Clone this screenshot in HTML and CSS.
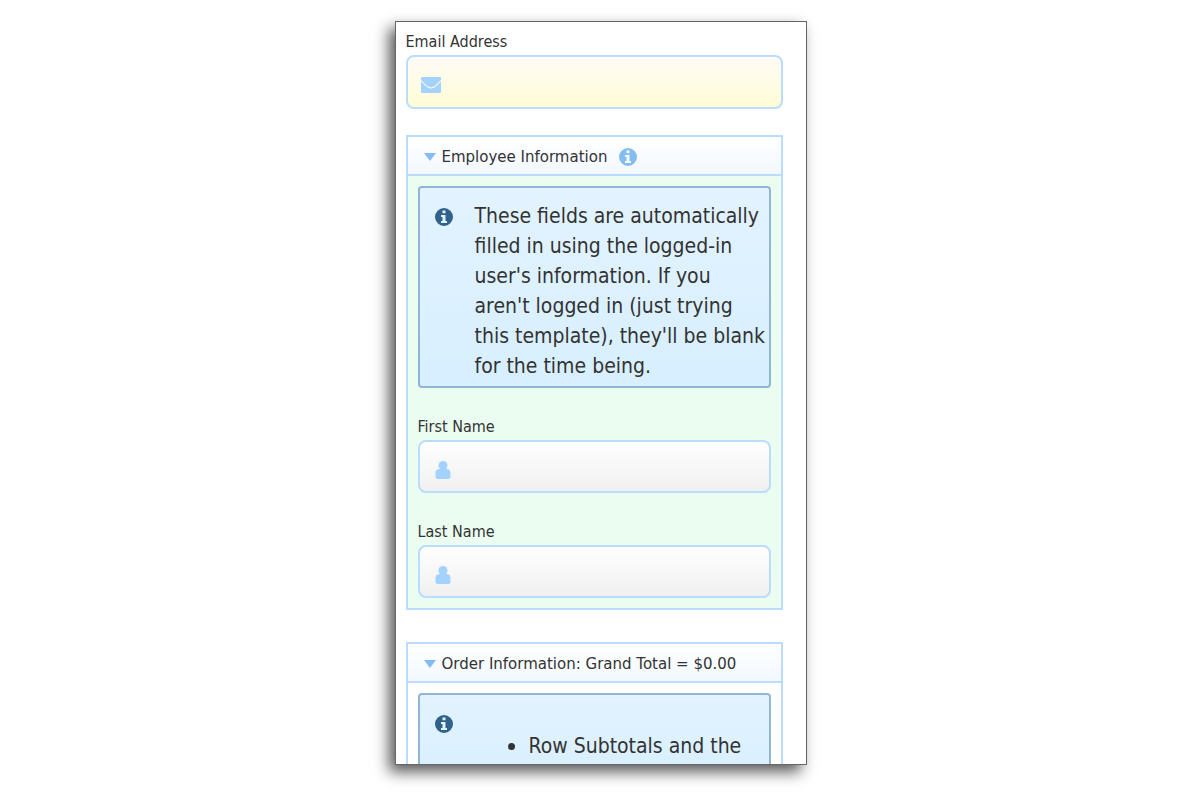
FILE: index.html
```html
<!DOCTYPE html>
<html lang="en">
<head>
    <meta charset="UTF-8">
    <meta name="viewport" content="width=device-width, initial-scale=1.0">
    <title>Order Form</title>
    <link rel="stylesheet" href="styles.css">
</head>
<body>
    <!-- Shared icons -->
    <svg class="icon-defs" aria-hidden="true">
        <symbol id="icon-mail" viewBox="0 0 20 16">
            <path d="M1 0h18q1 0 1 1v1.800Q17 6.200 14.500 8.600Q12 10.400 10 10.400T5.500 8.600Q3 6.200 0 2.800V1Q0 0 1 0z"/>
            <path d="M0 4.200Q2.500 7 5 9.200Q7.800 11.500 10 11.500T15 9.200Q17.500 7 20 4.200V15q0 1-1 1H1q-1 0-1-1z"/>
        </symbol>
        <symbol id="icon-user" viewBox="0 0 16 18">
            <circle cx="8" cy="4.500" r="4.500"/>
            <path d="M4 8H12Q15.500 8.500 15.500 12V15.500Q15.500 18 13 18H3Q.5 18 .5 15.500V12Q.5 8.500 4 8z"/>
        </symbol>
        <symbol id="icon-info" viewBox="0 0 18 18">
            <path fill-rule="evenodd" d="M9 0a9 9 0 1 1 0 18a9 9 0 1 1 0-18zM7.500 2.500v2.800h3V2.500zM6 7v2h1.500v4H6v2h6v-2h-1.500V7z"/>
        </symbol>
    </svg>

    <main class="form-panel">
        <form>
            <div class="field">
                <label for="email">Email Address</label>
                <div class="input-box required">
                    <svg class="icon-mail"><use href="#icon-mail"/></svg>
                    <input type="email" id="email">
                </div>
            </div>

            <details class="section employee" open>
                <summary>
                    <span class="arrow"></span>
                    <span>Employee Information</span>
                    <svg class="icon-info"><use href="#icon-info"/></svg>
                </summary>
                <div class="section-body">
                    <div class="notice">
                        <svg class="icon-info"><use href="#icon-info"/></svg>
                        <p>These fields are automatically filled in using the logged-in user's information. If you aren't logged in (just trying this template), they'll be blank for the time being.</p>
                    </div>
                    <div class="field">
                        <label for="firstName">First Name</label>
                        <div class="input-box">
                            <svg class="icon-user"><use href="#icon-user"/></svg>
                            <input type="text" id="firstName">
                        </div>
                    </div>
                    <div class="field">
                        <label for="lastName">Last Name</label>
                        <div class="input-box">
                            <svg class="icon-user"><use href="#icon-user"/></svg>
                            <input type="text" id="lastName">
                        </div>
                    </div>
                </div>
            </details>

            <details class="section" open>
                <summary>
                    <span class="arrow"></span>
                    <span>Order Information: Grand Total = $0.00</span>
                </summary>
                <div class="section-body">
                    <div class="notice">
                        <svg class="icon-info"><use href="#icon-info"/></svg>
                        <ul>
                            <li>Row Subtotals and the</li>
                        </ul>
                    </div>
                </div>
            </details>
        </form>
    </main>
</body>
</html>
```

FILE: styles.css
```css
:root {
    --border-color: #b9dcff;
    --icon-color: #a3d2ff;
    --arrow-color: #84bcf2;
    --notice-border: #91b6d5;
    --notice-icon: #30628c;
    --text-color: #333;
}

* {
    box-sizing: border-box;
}

body {
    margin: 0;
    padding: 21px 20px 45px;
    height: 100vh;
    background: white;
    color: var(--text-color);
    font-family: "DejaVu Sans Condensed", "DejaVu Sans", Tahoma, sans-serif;
    font-size: 16px;
    line-height: 20px;
}

svg {
    fill: currentColor;
    flex: none;
}

.icon-defs {
    display: none;
}

.form-panel {
    max-width: 412px;
    height: 100%;
    margin: 0 auto;
    padding: 10px 23px 0 10px;
    overflow: hidden;
    background: white;
    border: 1px solid #666;
    box-shadow: -6px 7px 14px rgba(0, 0, 0, 0.65);
}

.field label {
    display: block;
    margin-bottom: 3px;
}

.input-box {
    display: flex;
    align-items: center;
    height: 53px;
    padding: 6px 12px 0 15px;
    gap: 12px;
    color: var(--icon-color);
    background: linear-gradient(#fff, #f0f0f0);
    border: 2px solid var(--border-color);
    border-radius: 8px;
}

.input-box.required {
    height: 54px;
    padding-left: 13px;
    background: linear-gradient(#fffbf7, #fffdd5);
}

.input-box input {
    flex: 1;
    min-width: 0;
    padding: 0;
    border: none;
    outline: none;
    background: none;
    font: inherit;
    color: var(--text-color);
}

.icon-mail {
    width: 20px;
    height: 16px;
}

.icon-user {
    width: 16px;
    height: 18px;
}

.icon-info {
    width: 18px;
    height: 18px;
}

.section {
    margin-top: 32px;
    border: 2px solid var(--border-color);
}

.section.employee {
    margin-top: 26px;
    background: #eafdf0;
}

summary {
    display: flex;
    align-items: center;
    height: 39px;
    padding: 2px 0 0 16px;
    background: linear-gradient(#fff, #f2f8ff);
    border-bottom: 2px solid var(--border-color);
    font-family: "DejaVu Sans", Verdana, sans-serif;
    font-size: 15px;
    list-style: none;
    cursor: pointer;
}

summary .icon-info {
    margin-left: 12px;
    color: var(--arrow-color);
}

.arrow {
    margin-right: 6px;
    border: 6px solid transparent;
    border-top: 8px solid var(--arrow-color);
    border-bottom: none;
}

.section-body {
    padding: 10px;
}

.section-body .field {
    margin-top: 29px;
}

.notice {
    display: flex;
    gap: 22px;
    padding: 13px 0 5px 15px;
    background: linear-gradient(#e3f3ff, #d7efff);
    border: 2px solid var(--notice-border);
    border-radius: 4px;
    font-size: 21px;
    line-height: 30px;
}

.notice .icon-info {
    margin-top: 7px;
    color: var(--notice-icon);
}

.notice p {
    margin: 0;
}

.notice ul {
    margin: 22px 0 20px;
    padding-left: 54px;
}

.notice li::marker {
    font-size: 24px;
}
```
